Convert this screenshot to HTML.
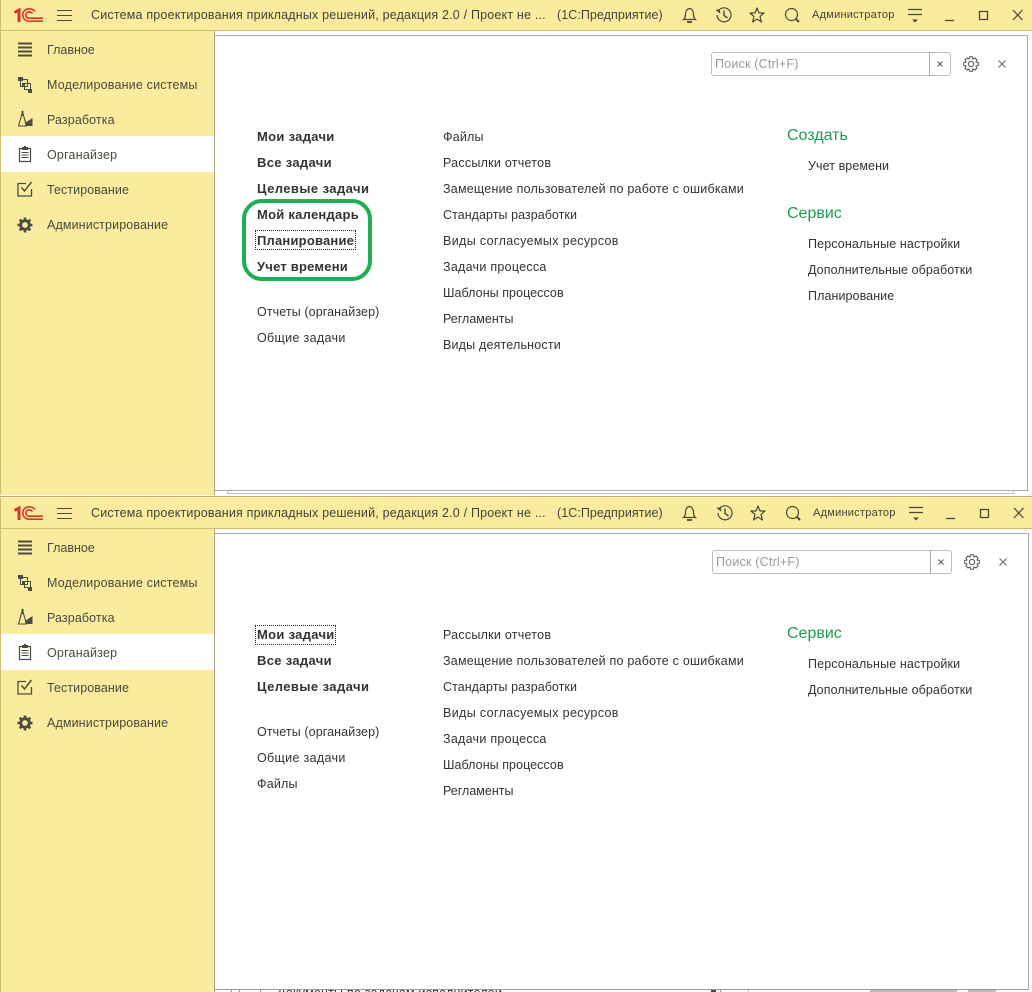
<!DOCTYPE html>
<html><head><meta charset="utf-8">
<style>
html,body{margin:0;padding:0;background:#fff}
#p{position:relative;width:1032px;height:992px;overflow:hidden;background:#fff;font-family:"Liberation Sans",Arial,sans-serif;font-size:12.5px;color:#333}
.w{position:absolute;left:0;width:1032px}
.a{position:absolute}
.t{position:absolute;white-space:nowrap;line-height:16px}
.b{font-weight:bold;color:#333;font-size:13px}
.g{color:#1e9b50;font-size:16px;line-height:20px}
.s{color:#4a4a3c}
svg{position:absolute;overflow:visible}
</style></head><body><div id="p">
<svg width="0" height="0" style="left:0;top:0">
<defs>
<symbol id="logo" viewBox="0 0 30 14" overflow="visible"><g fill="none" stroke="#d8362a"><path d="M.5 4.500 5 2V14" stroke-width="3"/><path d="M21 3.500C19.500 1.500 17.500 .8 15 .8A6.200 6.200 0 0 0 15 13.200H29" stroke-width="1.600"/><path d="M18.500 5.500C17.500 4.300 16.500 3.800 15 3.800A3.200 3.200 0 0 0 15 10.200H29" stroke-width="1.600"/></g></symbol>
<symbol id="i1" viewBox="0 0 16 16" overflow="visible"><g fill="#4c4c40"><rect x="1" y="1.500" width="14" height="2"/><rect x="1" y="5.500" width="14" height="2"/><rect x="1" y="9.500" width="14" height="2"/><rect x="1" y="13.500" width="14" height="2"/></g></symbol>
<symbol id="i2" viewBox="0 0 16 16" overflow="visible"><g fill="none" stroke="#4c4c40"><path d="M3.500 2.500H10.500V9.500H3.500ZM7.500 6.500H13.500V12.500H7.500Z"/></g><g fill="#4c4c40"><rect x="1" y="0" width="5" height="4"/><rect x="5" y="6" width="3" height="3"/><rect x="11" y="12" width="4" height="4"/></g></symbol>
<symbol id="i3" viewBox="0 0 16 16" overflow="visible"><path d="M5.500 1 1.500 15H9.500Z" fill="none" stroke="#4c4c40" stroke-width="1.100"/><path d="M5.500 0V5" stroke="#4c4c40" stroke-width="2"/><path d="M15.500 7V15H8.500L8 12Z" fill="#4c4c40"/></symbol>
<symbol id="i4" viewBox="0 0 16 16" overflow="visible"><g fill="none" stroke="#4c4c40" stroke-width="1.200"><path d="M5 2.500H2.500V15.500H13.500V2.500H11"/></g><rect x="5" y="1" width="6" height="3" fill="#4c4c40"/><rect x="7" y="0" width="2" height="2" fill="#4c4c40"/><g fill="#4c4c40"><rect x="4.500" y="6" width="7" height="1"/><rect x="4.500" y="8.500" width="7" height="1"/><rect x="4.500" y="11" width="7" height="1"/></g></symbol>
<symbol id="i5" viewBox="0 0 16 16" overflow="visible"><path d="M9 2.500H1V15H14.500V8" fill="none" stroke="#4c4c40" stroke-width="1.300"/><path d="M4.500 6.500 7.500 10 14.500 1" fill="none" stroke="#4c4c40" stroke-width="1.500"/></symbol>
<symbol id="i6" viewBox="0 0 16 16" overflow="visible"><circle cx="8" cy="8" r="4.300" fill="none" stroke="#4c4c40" stroke-width="2.800"/><g stroke="#4c4c40" stroke-width="2.600"><path d="M8 0.500V3.500M8 12.500V15.500M0.500 8H3.500M12.500 8H15.500M2.700 2.700 4.800 4.800M11.200 11.200 13.300 13.300M13.300 2.700 11.200 4.800M4.800 11.200 2.700 13.300"/></g></symbol>
<symbol id="bell" viewBox="0 0 16 16" overflow="visible"><path d="M1.500 12.500C3.500 11 3.500 9 3.500 7C3.500 4 5.500 1.500 7.500 1.500C9.500 1.500 11.500 4 11.500 7C11.500 9 11.500 11 13.500 12.500Z" fill="none" stroke="#4a4a38" stroke-width="1.200"/><path d="M5 15H10" stroke="#4a4a38" stroke-width="1.800"/></symbol>
<symbol id="hist" viewBox="0 0 18 18" overflow="visible"><path d="M3.500 4.500A7 7 0 1 1 2 9" fill="none" stroke="#4a4a38" stroke-width="1.200"/><path d="M0.500 3.500H5V8Z" fill="#4a4a38" transform="rotate(-8 3 5)"/><path d="M9 4.500V9.500L12.500 12" fill="none" stroke="#4a4a38" stroke-width="1.400"/></symbol>
<symbol id="star" viewBox="0 0 16 16" overflow="visible"><path d="M8 1 10 6H15L11 9.500 12.500 15 8 12 3.500 15 5 9.500 1 6H6Z" fill="none" stroke="#4a4a38" stroke-width="1.200" stroke-linejoin="round"/></symbol>
<symbol id="search" viewBox="0 0 16 16" overflow="visible"><circle cx="7.500" cy="7.500" r="6" fill="none" stroke="#4a4a38" stroke-width="1.200"/><path d="M11.500 11.500 15 15" stroke="#4a4a38" stroke-width="2"/></symbol>
<symbol id="gear" viewBox="0 0 16 16" overflow="visible"><path d="M6.500 0.700H9.500L10 3 12 2 14 4 13 6 15.300 6.500V9.500L13 10 14 12 12 14 10 13 9.500 15.300H6.500L6 13 4 14 2 12 3 10 0.700 9.500V6.500L3 6 2 4 4 2 6 3Z" fill="none" stroke="#555" stroke-width="1"/><circle cx="8" cy="8" r="2.700" fill="none" stroke="#555" stroke-width="1"/></symbol>
<symbol id="win" viewBox="0 0 362 30" overflow="visible">
<path d="M238 9.500H252M238 14.500H252" stroke="#4a4a38" stroke-width="1.200"/><path d="M242 19.500H248L245 22.500Z" fill="#4a4a38"/>
<path d="M275 20.500H284" stroke="#4a4a38" stroke-width="1.300"/>
<rect x="309.500" y="11.500" width="8" height="8" fill="none" stroke="#4a4a38" stroke-width="1.300"/>
<path d="M343 10 352.500 20M352.500 10 343 20" stroke="#4a4a38" stroke-width="1.200"/>
</symbol>
</defs>
</svg>

<!-- window 1 -->
<div class="w" style="top:0;height:497px">
  <div class="a" style="left:215px;top:30px;width:817px;height:467px;background:#fff"></div>
  <div class="a" style="left:215px;top:35px;width:813px;height:1px;background:#aaa"></div>
  <div class="a" style="left:1027px;top:35px;width:1px;height:456px;background:#aaa"></div>
  <div class="a" style="left:215px;top:490px;width:813px;height:1px;background:#aaa"></div>
  <div class="a" style="left:227px;top:491px;width:785px;height:2px;border:1px solid #bbb;border-top:0"></div>
  <div class="a" style="left:0;top:0;width:1032px;height:30px;background:#fbeb9e;border-bottom:1px solid #cfbd73"></div>
  <div class="a" style="left:0;top:31px;width:214px;height:464px;background:#fbeb9e;border-right:1px solid #a9a68e"></div>
  <div class="a" style="left:0;top:0;width:1px;height:495px;background:#cfbd73"></div>
  <div class="a" style="left:1px;top:136px;width:213px;height:36px;background:#fff"></div>

  <svg style="left:14px;top:8px" width="30" height="14"><use href="#logo"/></svg>
  <svg style="left:57px;top:10px" width="15" height="11"><path d="M0 .5H15M0 5.500H15M0 10.500H15" stroke="#4a4a38" fill="none"/></svg>
  <div class="t" style="left:91px;top:7px;color:#43433a;letter-spacing:.19px">Система проектирования прикладных решений, редакция 2.0 / Проект не ...</div>
  <div class="t" style="left:557px;top:7px;color:#43433a;letter-spacing:.06px">(1С:Предприятие)</div>
  <svg style="left:682px;top:7px" width="16" height="16"><use href="#bell"/></svg>
  <svg style="left:715px;top:6px" width="18" height="18"><use href="#hist"/></svg>
  <svg style="left:749px;top:7px" width="16" height="16"><use href="#star"/></svg>
  <svg style="left:784px;top:7px" width="16" height="16"><use href="#search"/></svg>
  <div class="t" style="left:812px;top:7px;font-size:11px;letter-spacing:.25px;color:#43433a">Администратор</div>
  <svg style="left:670px;top:0" width="362" height="30"><use href="#win"/></svg>

  <svg style="left:17px;top:41px" width="16" height="16"><use href="#i1"/></svg><div class="t s" style="left:47px;top:42px">Главное</div>
  <svg style="left:17px;top:77px" width="16" height="16"><use href="#i2"/></svg><div class="t s" style="left:47px;top:77px;letter-spacing:.19px">Моделирование системы</div>
  <svg style="left:17px;top:111px" width="16" height="16"><use href="#i3"/></svg><div class="t s" style="left:47px;top:112px;letter-spacing:.1px">Разработка</div>
  <svg style="left:17px;top:146px" width="16" height="16"><use href="#i4"/></svg><div class="t s" style="left:47px;top:147px;letter-spacing:.2px">Органайзер</div>
  <svg style="left:17px;top:181px" width="16" height="16"><use href="#i5"/></svg><div class="t s" style="left:47px;top:182px;letter-spacing:.08px">Тестирование</div>
  <svg style="left:17px;top:217px" width="16" height="16"><use href="#i6"/></svg><div class="t s" style="left:47px;top:217px;letter-spacing:.12px">Администрирование</div>

  <div class="a" style="left:711px;top:52px;width:240px;height:24px;border:1px solid #bbb;border-radius:3px;box-sizing:border-box;background:#fff"></div>
  <div class="a" style="left:929px;top:52px;width:1px;height:24px;background:#aaa"></div>
  <div class="t" style="left:715px;top:56px;color:#999;letter-spacing:.2px">Поиск (Ctrl+F)</div>
  <svg style="left:937px;top:61px" width="6" height="6"><path d="M0.500 .5 5.500 5.500M5.500 .5 .5 5.500" stroke="#555" fill="none"/></svg>
  <svg style="left:963px;top:56px" width="16" height="16"><use href="#gear"/></svg>
  <svg style="left:998px;top:60px" width="8" height="8"><path d="M.5 .5 7.500 7.500M7.500 .5 .5 7.500" stroke="#666" fill="none"/></svg>

  <div class="t b" style="left:257px;top:129px;letter-spacing:.3px">Мои задачи</div>
  <div class="t b" style="left:257px;top:155px;letter-spacing:.32px">Все задачи</div>
  <div class="t b" style="left:257px;top:181px;letter-spacing:.43px">Целевые задачи</div>
  <div class="t b" style="left:257px;top:207px;letter-spacing:.25px">Мой календарь</div>
  <div class="a" style="left:255px;top:230px;width:99px;height:18px;border:1px dotted #222"></div>
  <div class="t b" style="left:257px;top:233px;letter-spacing:.2px">Планирование</div>
  <div class="t b" style="left:257px;top:259px;letter-spacing:.22px">Учет времени</div>
  <div class="t" style="left:257px;top:304px;letter-spacing:.1px">Отчеты (органайзер)</div>
  <div class="t" style="left:257px;top:330px;letter-spacing:.33px">Общие задачи</div>
  <div class="a" style="left:242px;top:199px;width:130px;height:82px;box-sizing:border-box;border:4px solid #1fae51;border-radius:20px"></div>

  <div class="t" style="left:443px;top:129px;letter-spacing:.2px">Файлы</div>
  <div class="t" style="left:443px;top:155px;letter-spacing:.25px">Рассылки отчетов</div>
  <div class="t" style="left:443px;top:181px;letter-spacing:.22px">Замещение пользователей по работе с ошибками</div>
  <div class="t" style="left:443px;top:207px;letter-spacing:.05px">Стандарты разработки</div>
  <div class="t" style="left:443px;top:233px;letter-spacing:.36px">Виды согласуемых ресурсов</div>
  <div class="t" style="left:443px;top:259px;letter-spacing:.27px">Задачи процесса</div>
  <div class="t" style="left:443px;top:285px;letter-spacing:.06px">Шаблоны процессов</div>
  <div class="t" style="left:443px;top:311px">Регламенты</div>
  <div class="t" style="left:443px;top:337px;letter-spacing:.18px">Виды деятельности</div>

  <div class="t g" style="left:787px;top:126px">Создать</div>
  <div class="t" style="left:808px;top:158px;letter-spacing:.08px">Учет времени</div>
  <div class="t g" style="left:787px;top:204px">Сервис</div>
  <div class="t" style="left:808px;top:236px;letter-spacing:.13px">Персональные настройки</div>
  <div class="t" style="left:808px;top:262px;letter-spacing:.08px">Дополнительные обработки</div>
  <div class="t" style="left:808px;top:288px;letter-spacing:.08px">Планирование</div>
</div>

<!-- window 2 -->
<div class="w" style="top:498px;height:494px">
  <div class="a" style="left:215px;top:30px;width:817px;height:464px;background:#fff"></div>
  <div class="a" style="left:215px;top:35px;width:814px;height:1px;background:#aaa"></div>
  <div class="a" style="left:1028px;top:35px;width:1px;height:456px;background:#aaa"></div>
  <div class="a" style="left:215px;top:491px;width:814px;height:1px;background:#999"></div>
  <div class="a" style="left:0;top:-2px;width:1032px;height:1px;background:#bdb27a"></div>
  <div class="a" style="left:0;top:-1px;width:1032px;height:31px;background:#fbeb9e;border-bottom:1px solid #cfbd73"></div>
  <div class="a" style="left:0;top:31px;width:214px;height:463px;background:#fbeb9e;border-right:1px solid #a9a68e"></div>
  <div class="a" style="left:0;top:0;width:1px;height:494px;background:#cfbd73"></div>
  <div class="a" style="left:1px;top:136px;width:213px;height:36px;background:#fff"></div>

  <svg style="left:14px;top:8px" width="30" height="14"><use href="#logo"/></svg>
  <svg style="left:57px;top:10px" width="15" height="11"><path d="M0 .5H15M0 5.500H15M0 10.500H15" stroke="#4a4a38" fill="none"/></svg>
  <div class="t" style="left:91px;top:7px;color:#43433a;letter-spacing:.19px">Система проектирования прикладных решений, редакция 2.0 / Проект не ...</div>
  <div class="t" style="left:557px;top:7px;color:#43433a;letter-spacing:.06px">(1С:Предприятие)</div>
  <svg style="left:682px;top:7px" width="16" height="16"><use href="#bell"/></svg>
  <svg style="left:716px;top:6px" width="18" height="18"><use href="#hist"/></svg>
  <svg style="left:750px;top:7px" width="16" height="16"><use href="#star"/></svg>
  <svg style="left:785px;top:7px" width="16" height="16"><use href="#search"/></svg>
  <div class="t" style="left:813px;top:7px;font-size:11px;letter-spacing:.25px;color:#43433a">Администратор</div>
  <svg style="left:671px;top:0" width="362" height="30"><use href="#win"/></svg>

  <svg style="left:17px;top:41px" width="16" height="16"><use href="#i1"/></svg><div class="t s" style="left:47px;top:42px">Главное</div>
  <svg style="left:17px;top:77px" width="16" height="16"><use href="#i2"/></svg><div class="t s" style="left:47px;top:77px;letter-spacing:.19px">Моделирование системы</div>
  <svg style="left:17px;top:111px" width="16" height="16"><use href="#i3"/></svg><div class="t s" style="left:47px;top:112px;letter-spacing:.1px">Разработка</div>
  <svg style="left:17px;top:146px" width="16" height="16"><use href="#i4"/></svg><div class="t s" style="left:47px;top:147px;letter-spacing:.2px">Органайзер</div>
  <svg style="left:17px;top:181px" width="16" height="16"><use href="#i5"/></svg><div class="t s" style="left:47px;top:182px;letter-spacing:.08px">Тестирование</div>
  <svg style="left:17px;top:217px" width="16" height="16"><use href="#i6"/></svg><div class="t s" style="left:47px;top:217px;letter-spacing:.12px">Администрирование</div>

  <div class="a" style="left:712px;top:52px;width:240px;height:24px;border:1px solid #bbb;border-radius:3px;box-sizing:border-box;background:#fff"></div>
  <div class="a" style="left:930px;top:52px;width:1px;height:24px;background:#aaa"></div>
  <div class="t" style="left:716px;top:56px;color:#999;letter-spacing:.2px">Поиск (Ctrl+F)</div>
  <svg style="left:938px;top:61px" width="6" height="6"><path d="M0.500 .5 5.500 5.500M5.500 .5 .5 5.500" stroke="#555" fill="none"/></svg>
  <svg style="left:964px;top:56px" width="16" height="16"><use href="#gear"/></svg>
  <svg style="left:999px;top:60px" width="8" height="8"><path d="M.5 .5 7.500 7.500M7.500 .5 .5 7.500" stroke="#666" fill="none"/></svg>

  <div class="a" style="left:255px;top:127px;width:79px;height:18px;border:1px dotted #222"></div>
  <div class="t b" style="left:257px;top:129px;letter-spacing:.3px">Мои задачи</div>
  <div class="t b" style="left:257px;top:155px;letter-spacing:.32px">Все задачи</div>
  <div class="t b" style="left:257px;top:181px;letter-spacing:.43px">Целевые задачи</div>
  <div class="t" style="left:257px;top:226px;letter-spacing:.1px">Отчеты (органайзер)</div>
  <div class="t" style="left:257px;top:252px;letter-spacing:.33px">Общие задачи</div>
  <div class="t" style="left:257px;top:278px;letter-spacing:.2px">Файлы</div>

  <div class="t" style="left:443px;top:129px;letter-spacing:.25px">Рассылки отчетов</div>
  <div class="t" style="left:443px;top:155px;letter-spacing:.22px">Замещение пользователей по работе с ошибками</div>
  <div class="t" style="left:443px;top:181px;letter-spacing:.05px">Стандарты разработки</div>
  <div class="t" style="left:443px;top:207px;letter-spacing:.36px">Виды согласуемых ресурсов</div>
  <div class="t" style="left:443px;top:233px;letter-spacing:.27px">Задачи процесса</div>
  <div class="t" style="left:443px;top:259px;letter-spacing:.06px">Шаблоны процессов</div>
  <div class="t" style="left:443px;top:285px">Регламенты</div>

  <div class="t g" style="left:787px;top:126px">Сервис</div>
  <div class="t" style="left:808px;top:158px;letter-spacing:.13px">Персональные настройки</div>
  <div class="t" style="left:808px;top:184px;letter-spacing:.08px">Дополнительные обработки</div>

  <div class="a" style="left:215px;top:492px;width:817px;height:2px;overflow:hidden;background:#fff">
    <div class="t" style="left:62px;top:-5px;font-size:12.5px;color:#333;letter-spacing:.2px">Документы по задачам исполнителей</div>
    <div class="a" style="left:16px;top:0;width:1px;height:2px;background:#999"></div>
    <div class="a" style="left:24px;top:0;width:1px;height:2px;background:#999"></div>
    <div class="a" style="left:45px;top:0;width:1px;height:2px;background:#999"></div>
    <div class="a" style="left:496px;top:0;width:5px;height:2px;background:#444"></div>
    <div class="a" style="left:505px;top:0;width:1px;height:2px;background:#999"></div>
    <div class="a" style="left:533px;top:0;width:1px;height:2px;background:#bbb"></div>
    <div class="a" style="left:655px;top:0;width:87px;height:2px;background:#bbb"></div>
    <div class="a" style="left:753px;top:0;width:28px;height:2px;background:#bbb"></div>
  </div>
</div>
</div></body></html>
